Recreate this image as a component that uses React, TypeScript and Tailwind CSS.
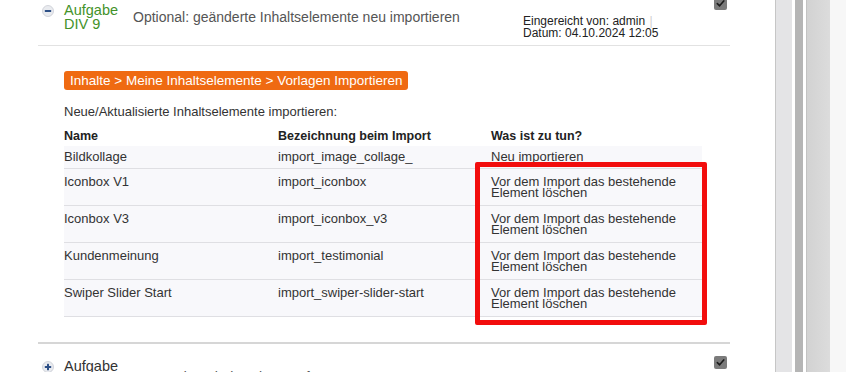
import React from 'react';

const rows = [
  { name: 'Bildkollage', key: 'import_image_collage_', todo: 'Neu importieren' },
  { name: 'Iconbox V1', key: 'import_iconbox', todo: 'Vor dem Import das bestehende Element löschen' },
  { name: 'Iconbox V3', key: 'import_iconbox_v3', todo: 'Vor dem Import das bestehende Element löschen' },
  { name: 'Kundenmeinung', key: 'import_testimonial', todo: 'Vor dem Import das bestehende Element löschen' },
  { name: 'Swiper Slider Start', key: 'import_swiper-slider-start', todo: 'Vor dem Import das bestehende Element löschen' },
];

const Toggle = ({ open }: { open: boolean }) => (
  <svg width="12" height="12" viewBox="0 0 12 12" className="shrink-0">
    <circle cx="6" cy="6" r="5.5" fill="#e9ebef" stroke="#c9ccd3" strokeWidth="0.8" />
    <rect x="2.8" y="5" width="6.4" height="2" rx="0.5" fill="#2d4f86" />
    {open ? null : <rect x="5" y="2.8" width="2" height="6.4" rx="0.5" fill="#2d4f86" />}
  </svg>
);

const Check = () => (
  <div className="w-[13px] h-[13px] rounded-[2px] bg-[#7b7b7b] flex items-center justify-center shrink-0">
    <svg width="9" height="9" viewBox="0 0 10 10">
      <path d="M1.5 5.2 L4 7.6 L8.6 2.2" fill="none" stroke="#1c1c1c" strokeWidth="1.8" strokeLinecap="round" strokeLinejoin="round" />
    </svg>
  </div>
);

export default function App() {
  return (
    <div className="flex h-[372px] w-[846px] overflow-hidden bg-white font-['Liberation_Sans',Arial,sans-serif] text-[#333]">
      <div className="relative w-[775px] shrink-0">
        <div className="ml-[38px] w-[692px]">
          {/* open task header */}
          <div className="flex h-[46px] items-start border-b border-[#e2e2e2]">
            <div className="ml-[4px] mt-[5px]">
              <Toggle open />
            </div>
            <div className="ml-[10px] mt-[4px] w-[69px] text-[14.5px] leading-[13.5px] text-[#43922a]">
              Aufgabe
              <br />
              DIV 9
            </div>
            <div className="mt-[9px] w-[390px] text-[14px] leading-[16px] text-[#555]">
              Optional: geänderte Inhaltselemente neu importieren
            </div>
            <div className="mt-[15px] w-[191px] text-[12px] leading-[12px] text-[#222]">
              Eingereicht von: admin <span className="ml-[1px] text-[#cfcfcf]">|</span>
              <br />
              Datum: 04.10.2024 12:05
            </div>
            <div className="-mt-[3px]">
              <Check />
            </div>
          </div>

          {/* body */}
          <div className="pl-[26px] pt-[25px]">
            <div className="h-[19px] w-fit rounded-[3px] bg-[#ef6a12] px-[6px] text-[13.5px] leading-[19px] text-white">
              Inhalte &gt; Meine Inhaltselemente &gt; Vorlagen Importieren
            </div>
            <div className="mt-[14px] text-[13px] leading-[16px] text-[#333]">
              Neue/Aktualisierte Inhaltselemente importieren:
            </div>

            <div className="mt-[6px] w-[638px] text-[13px] text-[#333]">
              <div className="grid h-[20px] grid-cols-[214px_213px_1fr] pt-[4px] text-[12.5px] font-bold leading-[13px] text-[#222]">
                <div>Name</div>
                <div>Bezeichnung beim Import</div>
                <div>Was ist zu tun?</div>
              </div>
              {rows.map((r, i) => (
                <div
                  key={r.key}
                  className={
                    i === 0
                      ? 'grid h-[22px] grid-cols-[214px_213px_1fr] bg-[#f8f8fb] pt-[5px] leading-[11px]'
                      : 'grid h-[37px] grid-cols-[214px_213px_1fr] border-t border-[#dfdfe3] bg-[#f8f8fb] pt-[7px] leading-[11px]'
                  }
                >
                  <div>{r.name}</div>
                  <div>{r.key}</div>
                  <div className="pr-[20px]">{r.todo}</div>
                </div>
              ))}
              <div className="border-t border-[#dfdfe3]" />
            </div>
          </div>

          {/* collapsed task */}
          <div className="mt-[25px] h-[2px] bg-[#d6d6d6]" />
          <div className="flex items-start pt-[12px]">
            <div className="ml-[4px] mt-[5px]">
              <Toggle open={false} />
            </div>
            <div className="ml-[10px] mt-[4px] w-[69px] text-[14.5px] leading-[13px] text-[#333]">Aufgabe</div>
            <div className="mt-[13px] w-[390px] text-[14px] leading-[16px] text-[#555]">
              Layout der Inhaltsseiten prüfen
            </div>
            <div className="w-[191px]" />
            <div>
              <Check />
            </div>
          </div>
        </div>

        {/* highlight frame */}
        <div className="absolute left-[475px] top-[162px] h-[163px] w-[232px] rounded-[2px] border-[5px] border-[#f20d0d]" />
      </div>

      {/* right frame edge */}
      <div className="w-[17px] shrink-0 border-l border-[#c6c6c6] bg-[#e4e4e6]" />
      <div className="w-[3px] shrink-0 bg-white" />
      <div className="w-[8px] shrink-0 bg-[#b5b5b5]" />
      <div className="w-[3px] shrink-0 bg-white" />
      <div className="w-[24px] shrink-0 border-l border-[#c2c2c2] bg-gradient-to-r from-[#d2d2d2] to-[#dcdcdc]" />
      <div className="flex-1 bg-[#f7f7f7]" />
    </div>
  );
}
